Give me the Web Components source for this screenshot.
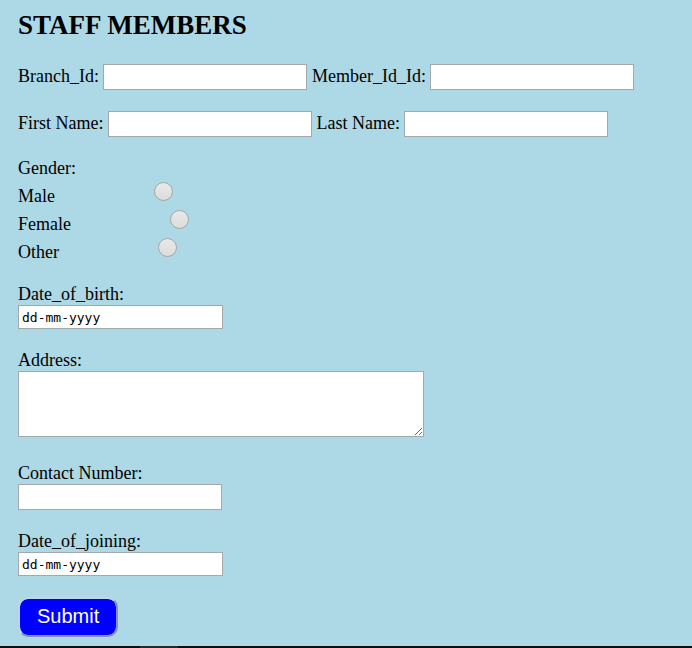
<!DOCTYPE html>
<html lang="en">
<head>
<meta charset="utf-8">
<title>Staff Members</title>
<style>
html, body { margin: 0; }
body { background: #add8e6; color: #000; font: 18px/21px "Liberation Serif", "Times New Roman", serif; }
</style>
</head>
<body>
<staff-page>
  <staff-form heading="STAFF MEMBERS">
    <field-row>
      <text-field label="Branch_Id:" name="branch"></text-field>
      <text-field label="Member_Id_Id:" name="member"></text-field>
    </field-row>
    <field-row>
      <text-field label="First Name:" name="first"></text-field>
      <text-field label="Last Name:" name="last"></text-field>
    </field-row>
    <radio-group label="Gender:" name="gender" options="Male,Female,Other"></radio-group>
    <date-field label="Date_of_birth:" name="birth"></date-field>
    <area-field label="Address:" name="address"></area-field>
    <text-field stacked label="Contact Number:" name="contact"></text-field>
    <date-field label="Date_of_joining:" name="joining"></date-field>
    <submit-button>Submit</submit-button>
  </staff-form>
</staff-page>
<script>
const define = (name, render) => customElements.define(name, class extends HTMLElement {
  constructor() {
    super();
    this.attachShadow({ mode: "open" });
  }
  connectedCallback() {
    this.shadowRoot.innerHTML = render(this);
  }
});
const attr = (el, name) => el.getAttribute(name) || "";
const boxStyle = `
  * { box-sizing: border-box; }
  input, textarea { margin: 0; border: 1px solid #a3a9ab; border-radius: 0; background: #fff; color: #000; max-width: 100%; }
`;

define("staff-page", () => `
  <style>
    :host { display: flex; flex-direction: column; min-height: 100vh; }
    main { padding: 9px 18px 8px; }
    footer { display: flex; flex-shrink: 0; height: 2px; margin-top: auto; background: #0b0f14; padding-left: 140px; }
    footer span { width: 38px; background: #25282c; }
  </style>
  <main><slot></slot></main>
  <footer><span></span></footer>`);

define("staff-form", el => `
  <style>
    :host { display: block; }
    h2 { margin: 0 0 23px; font-size: 27px; line-height: 32px; font-weight: bold; }
    form { display: flex; flex-direction: column; align-items: flex-start; gap: 21px; }
  </style>
  <h2>${attr(el, "heading")}</h2>
  <form><slot></slot></form>`);

define("field-row", () => `
  <style>:host { display: flex; flex-wrap: wrap; gap: 5px; }</style>
  <slot></slot>`);

define("text-field", el => `
  <style>
    ${boxStyle}
    :host { display: flex; align-items: baseline; gap: 4px; }
    :host([stacked]) { flex-direction: column; align-items: flex-start; gap: 0; }
    input { width: 204px; height: 26px; padding: 0 3px; font: 16px "Liberation Sans", Arial, sans-serif; }
  </style>
  <label for="field">${attr(el, "label")}</label>
  <input id="field" type="text" name="${attr(el, "name")}">`);

define("date-field", el => `
  <style>
    ${boxStyle}
    :host { display: flex; flex-direction: column; align-items: flex-start; }
    input { width: 205px; height: 24px; padding: 0 3px; font: 13px "DejaVu Sans Mono", monospace; }
    input::placeholder { color: #000; opacity: 1; }
  </style>
  <label for="field">${attr(el, "label")}</label>
  <input id="field" type="text" inputmode="numeric" placeholder="dd-mm-yyyy" name="${attr(el, "name")}">`);

define("area-field", el => `
  <style>
    ${boxStyle}
    :host { display: flex; flex-direction: column; align-items: flex-start; margin-bottom: 5px; }
    textarea { width: 406px; height: 66px; padding: 3px; resize: both; font: 16px "Liberation Mono", monospace; }
  </style>
  <label for="field">${attr(el, "label")}</label>
  <textarea id="field" name="${attr(el, "name")}"></textarea>`);

define("radio-group", el => `
  <style>
    :host { display: block; }
    fieldset { margin: 0; padding: 0; border: 0; min-width: 0; }
    legend { padding: 0; }
    div { display: flex; height: 28px; gap: 99px; }
    label { align-self: flex-end; }
    input { appearance: none; box-sizing: border-box; width: 19px; height: 19px; margin: 3px 0 0; border: 1px solid #a2a8aa; border-radius: 50%; background: linear-gradient(#e9e9e9, #dcdcdc); }
    input:checked { background: radial-gradient(#444 35%, #e4e4e4 40%); }
  </style>
  <fieldset>
    <legend>${attr(el, "label")}</legend>
    ${attr(el, "options").split(",").map(o => `<div><label for="${o}">${o}</label><input type="radio" id="${o}" name="${attr(el, "name")}" value="${o}"></div>`).join("")}
  </fieldset>`);

define("submit-button", () => `
  <style>
    :host { display: block; }
    button { display: block; margin: 0; padding: 6px 17px 7px; border: 2px solid; border-color: #c3d3ea #8b8fa8 #8b8fa8 #c3d3ea; border-radius: 10px; background: #00f; background-clip: padding-box; color: #fff; font: 20px/23px "Liberation Sans", Arial, sans-serif; }
  </style>
  <button type="button"><slot></slot></button>`);
</script>
</body>
</html>
